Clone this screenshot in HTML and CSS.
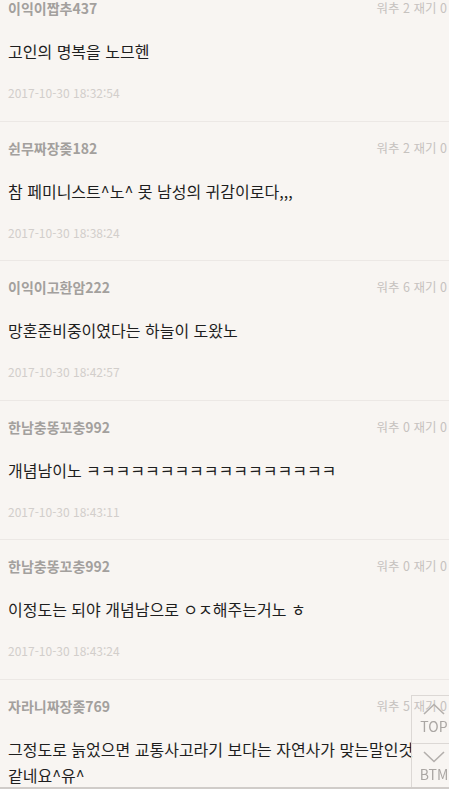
FILE: index.html
```html
<!DOCTYPE html>
<html lang="ko">
<head>
<meta charset="utf-8">
<title>댓글</title>
<link rel="stylesheet" href="styles.css">
</head>
<body>
<ul class="comments">
  <li class="comment">
    <div class="head"><span class="name">이익이짭추437</span><span class="meta">워추 2 재기 0</span></div>
    <p class="body">고인의 명복을 노므헨</p>
    <div class="date">2017-10-30 18:32:54</div>
  </li>
  <li class="comment">
    <div class="head"><span class="name">쉰무짜장좆182</span><span class="meta">워추 2 재기 0</span></div>
    <p class="body">참 페미니스트^노^ 못 남성의 귀감이로다,,,</p>
    <div class="date">2017-10-30 18:38:24</div>
  </li>
  <li class="comment">
    <div class="head"><span class="name">이익이고환암222</span><span class="meta">워추 6 재기 0</span></div>
    <p class="body">망혼준비중이였다는 하늘이 도왔노</p>
    <div class="date">2017-10-30 18:42:57</div>
  </li>
  <li class="comment">
    <div class="head"><span class="name">한남충똥꼬충992</span><span class="meta">워추 0 재기 0</span></div>
    <p class="body">개념남이노 ㅋㅋㅋㅋㅋㅋㅋㅋㅋㅋㅋㅋㅋㅋㅋㅋㅋ</p>
    <div class="date">2017-10-30 18:43:11</div>
  </li>
  <li class="comment">
    <div class="head"><span class="name">한남충똥꼬충992</span><span class="meta">워추 0 재기 0</span></div>
    <p class="body">이정도는 되야 개념남으로 ㅇㅈ해주는거노 ㅎ</p>
    <div class="date">2017-10-30 18:43:24</div>
  </li>
  <li class="comment">
    <div class="head"><span class="name">자라니짜장좆769</span><span class="meta">워추 5 재기 0</span></div>
    <p class="body">그정도로 늙었으면 교통사고라기 보다는 자연사가 맞는말인것 같네요^유^</p>
    <div class="date">2017-10-30 18:45:02</div>
  </li>
</ul>
<nav class="scroller">
  <a class="scroll-btn" href="#">
    <svg width="22" height="12" viewBox="0 0 22 12"><path d="M1 11 L11 1.5 L21 11" fill="none" stroke="#b3afac" stroke-width="1.6"/></svg>
    <span>TOP</span>
  </a>
  <a class="scroll-btn" href="#">
    <svg width="22" height="12" viewBox="0 0 22 12"><path d="M1 1 L11 10.5 L21 1" fill="none" stroke="#b3afac" stroke-width="1.6"/></svg>
    <span>BTM</span>
  </a>
</nav>
<div class="bottom-edge"></div>
</body>
</html>
```
FILE: styles.css
```css
html, body {
  margin: 0;
  padding: 0;
  background: #f8f5f2;
  font-family: "Noto Sans CJK KR", "Noto Sans", sans-serif;
  overflow: hidden;
}
.comments {
  list-style: none;
  margin: -18px 0 0;
  padding: 0;
}
.comment {
  padding: 16px 2px 18.5px 8px;
  border-bottom: 1px solid #ece8e5;
}
.head {
  display: flex;
  justify-content: space-between;
  align-items: center;
  height: 20px;
}
.name {
  font-size: 14px;
  font-weight: 700;
  color: #a3a09d;
  line-height: 20px;
}
.meta {
  font-size: 12.5px;
  color: #c6c2bf;
  line-height: 20px;
}
.body {
  margin: 20px 0 0;
  padding-right: 8px;
  font-size: 16px;
  line-height: 26px;
  color: #1e1e1e;
  word-break: keep-all;
}
.date {
  margin-top: 20px;
  font-size: 12px;
  line-height: 18px;
  color: #d2cecb;
}
.scroller {
  position: fixed;
  right: -8px;
  top: 695px;
  width: 44px;
  display: flex;
  flex-direction: column;
  border: 1px solid #dcd8d5;
}
.scroll-btn {
  height: 47px;
  display: flex;
  flex-direction: column;
  align-items: center;
  justify-content: flex-start;
  padding-top: 7px;
  box-sizing: border-box;
  text-decoration: none;
  color: #aaa6a3;
  font-size: 14px;
  line-height: 18px;
}
.scroll-btn + .scroll-btn {
  border-top: 1px solid #dcd8d5;
}
.scroll-btn svg {
  display: block;
  margin-bottom: 2px;
}
.bottom-edge {
  position: fixed;
  left: 0;
  right: 0;
  bottom: 0;
  height: 2px;
  background: #d0ccc9;
}
```
